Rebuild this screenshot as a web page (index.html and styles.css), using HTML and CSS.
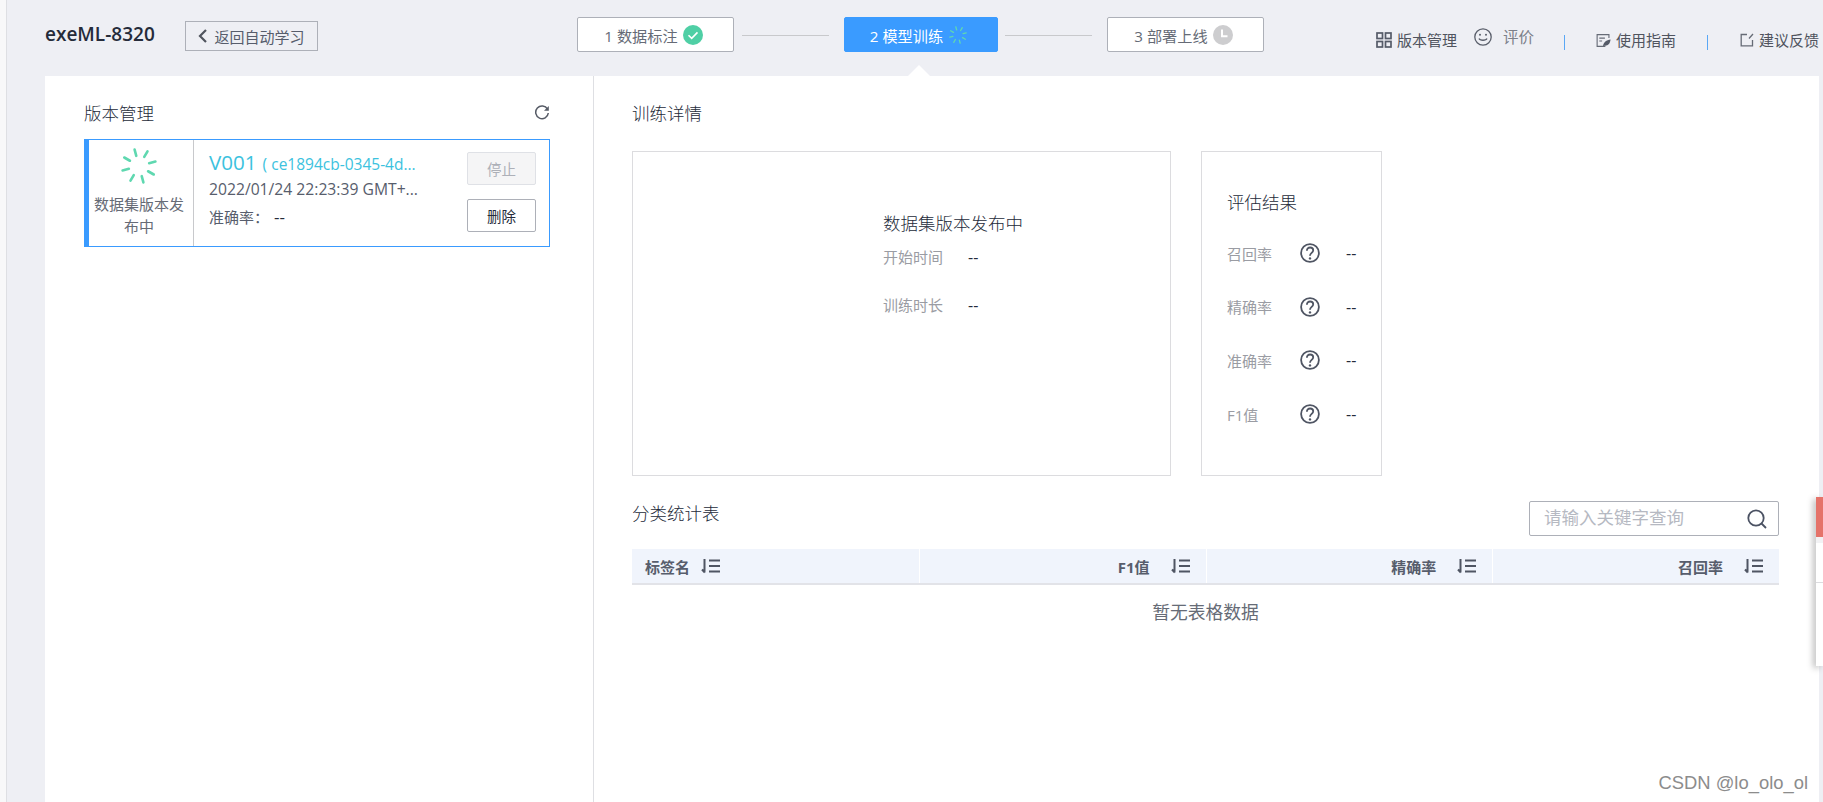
FILE: index.html
```html
<!DOCTYPE html>
<html lang="zh-CN">
<head>
<meta charset="utf-8">
<title>exeML-8320</title>
<link rel="stylesheet" href="styles.css">
</head>
<body>
<svg class="defs" width="0" height="0" aria-hidden="true">
  <symbol id="spin" viewBox="-20 -20 40 40">
    <g stroke-width="2.6" stroke-linecap="round">
      <path d="M0-17V-10.500" transform="rotate(-15)"/>
      <path d="M0-17V-10.500" transform="rotate(30)"/>
      <path d="M0-17V-10.500" transform="rotate(75)"/>
      <path d="M0-17V-10.500" transform="rotate(120)"/>
      <path d="M0-17V-10.500" transform="rotate(165)"/>
      <path d="M0-17V-10.500" transform="rotate(210)"/>
      <path d="M0-17V-10.500" transform="rotate(255)"/>
      <path d="M0-17V-10.500" transform="rotate(300)"/>
    </g>
  </symbol>
  <symbol id="help" viewBox="0 0 20 20">
    <circle cx="10" cy="10" r="8.900" fill="none" stroke="#4f5563" stroke-width="1.800"/>
    <path d="M6.900 7.800c0-2 1.300-3.300 3.200-3.300s3.100 1.200 3.100 2.800c0 2.500-3.200 2.700-3.200 5.400" fill="none" stroke="#4f5563" stroke-width="1.800"/>
    <circle cx="10" cy="15.400" r="1.200" fill="#4f5563"/>
  </symbol>
  <symbol id="sort" viewBox="0 0 20 16">
    <path d="M3.500 1v13.500M3.800 14.500L1 11.500" fill="none" stroke="#4f5563" stroke-width="2"/>
    <path d="M8 2.500h11M8 8h11M8 13.500h11" fill="none" stroke="#4f5563" stroke-width="1.900"/>
  </symbol>
</svg>

<div class="page">
  <header class="topbar">
    <h1 class="app-title">exeML-8320</h1>
    <a class="back-btn">
      <svg class="back-icon" viewBox="0 0 10 14"><path d="M8 1L2 7l6 6" fill="none" stroke="#50545e" stroke-width="2.200"/></svg>
      返回自动学习
    </a>

    <nav class="steps">
      <div class="step">1 数据标注
        <svg class="step-icon" viewBox="0 0 20 20"><circle cx="10" cy="10" r="10" fill="#4fcfa5"/><path d="M5.500 10.200l3.200 3.200 5.800-6" fill="none" stroke="#fff" stroke-width="1.600"/></svg>
      </div>
      <span class="step-line"></span>
      <div class="step step-active">2 模型训练
        <svg class="step-icon step-spin"><use href="#spin"/></svg>
        <span class="step-caret"></span>
      </div>
      <span class="step-line"></span>
      <div class="step">3 部署上线
        <svg class="step-icon" viewBox="0 0 20 20"><circle cx="10" cy="10" r="10" fill="#cdcdcf"/><path d="M9 4.500v6.800h5.500" fill="none" stroke="#fff" stroke-width="2"/></svg>
      </div>
    </nav>

    <div class="top-links">
      <a class="top-link top-link-versions">
        <svg class="link-icon" viewBox="0 0 16 16"><g fill="none" stroke="#555b68" stroke-width="1.700"><rect x="1" y="1" width="5.500" height="5.500"/><rect x="9.500" y="1" width="5.500" height="5.500"/><rect x="1" y="9.500" width="5.500" height="5.500"/><rect x="9.500" y="9.500" width="5.500" height="5.500"/></g></svg>
        版本管理
      </a>
      <a class="top-link top-link-rate">
        <svg class="smile-icon" viewBox="0 0 18 18"><g fill="none" stroke="#5a5f6b" stroke-width="1.300"><circle cx="9" cy="9" r="8.200"/><path d="M5 10.500c1 2.300 7 2.300 8 0"/></g><circle cx="6" cy="6.800" r="1" fill="#5a5f6b"/><circle cx="12" cy="6.800" r="1" fill="#5a5f6b"/></svg>
        <span class="rate-text">评价</span>
      </a>
      <i class="link-sep link-sep-first"></i>
      <a class="top-link top-link-guide">
        <svg class="link-icon" viewBox="0 0 16 16"><path d="M10 14.300H1.200V1.700h12.600v3.500M3.500 5.500h6M3.500 8.500h3" fill="none" stroke="#666b76" stroke-width="1.200"/><path d="M7.500 14c.5-4 3.500-6.500 8-7-.3 4.500-3 7-6.500 6.500z" fill="#555b68"/></svg>
        使用指南
      </a>
      <i class="link-sep link-sep-second"></i>
      <a class="top-link top-link-feedback">
        <svg class="link-icon small" viewBox="0 0 14 14"><path d="M7 1.500H1.200v11.300h11.300V7M9 5.500l4-4.500" fill="none" stroke="#666b76" stroke-width="1.300"/></svg>
        建议反馈
      </a>
    </div>
  </header>

  <main class="content">
    <aside class="versions">
      <div class="versions-head">
        <h2 class="section-title">版本管理</h2>
        <svg class="refresh" viewBox="0 0 16 16"><path d="M13.500 4.200A6.300 6.300 0 1 0 14.300 8" fill="none" stroke="#565b66" stroke-width="1.500"/><path d="M14.800 1v4.800H10z" fill="#565b66"/></svg>
      </div>
      <article class="version-card">
        <div class="version-status">
          <svg class="status-spin"><use href="#spin"/></svg>
          <p>数据集版本发布中</p>
        </div>
        <div class="version-info">
          <div class="version-name"><b>V001</b> ( ce1894cb-0345-4d...</div>
          <div class="version-date">2022/01/24 22:23:39 GMT+...</div>
          <div class="version-acc"><span>准确率：</span><em>--</em></div>
        </div>
        <div class="version-actions">
          <button class="btn btn-disabled">停止</button>
          <button class="btn">删除</button>
        </div>
      </article>
    </aside>

    <section class="details">
      <h2 class="section-title">训练详情</h2>
      <div class="panels">
        <div class="panel panel-main">
          <div class="train-state">
            <h3>数据集版本发布中</h3>
            <dl class="train-row"><dt>开始时间</dt><dd>--</dd></dl>
            <dl class="train-row"><dt>训练时长</dt><dd>--</dd></dl>
          </div>
        </div>
        <div class="panel panel-eval">
          <h3>评估结果</h3>
          <dl class="eval-row"><dt>召回率</dt><svg class="help"><use href="#help"/></svg><dd>--</dd></dl>
          <dl class="eval-row"><dt>精确率</dt><svg class="help"><use href="#help"/></svg><dd>--</dd></dl>
          <dl class="eval-row"><dt>准确率</dt><svg class="help"><use href="#help"/></svg><dd>--</dd></dl>
          <dl class="eval-row"><dt>F1值</dt><svg class="help"><use href="#help"/></svg><dd>--</dd></dl>
        </div>
      </div>

      <div class="stats-head">
        <h2 class="section-title">分类统计表</h2>
        <div class="search">
          <span class="search-ph">请输入关键字查询</span>
          <svg class="search-icon" viewBox="0 0 20 20"><circle cx="9" cy="9" r="7.700" fill="none" stroke="#4b5263" stroke-width="1.800"/><path d="M14.500 14.500l4.500 4.500" stroke="#4b5263" stroke-width="1.800"/></svg>
        </div>
      </div>

      <div class="table-head">
        <div class="th th-left">标签名<svg class="sort"><use href="#sort"/></svg></div>
        <div class="th">F1值<svg class="sort"><use href="#sort"/></svg></div>
        <div class="th">精确率<svg class="sort"><use href="#sort"/></svg></div>
        <div class="th">召回率<svg class="sort"><use href="#sort"/></svg></div>
      </div>
      <div class="table-empty">暂无表格数据</div>
    </section>
  </main>
</div>

<div class="side-widget"><span class="side-red"></span><span class="side-gap"></span><span class="side-white"></span></div>
<div class="watermark">CSDN @lo_olo_ol</div>
</body>
</html>
```

FILE: styles.css
```css
* { box-sizing: border-box; }
html, body { height: 100%; }
body {
  margin: 0;
  height: 802px;
  overflow: hidden;
  background: #f8f8f9;
  font-family: "Open Sans", "Noto Sans CJK SC", sans-serif;
  color: #50545e;
}
.defs { position: absolute; }
.page {
  margin-left: 6px;
  height: 802px;
  background: #eeeff4;
  border-left: 1px solid #dedfe3;
  display: flex;
  flex-direction: column;
}
a { color: inherit; text-decoration: none; }
h1, h2, h3, p, dl, dd { margin: 0; font-weight: 400; }

/* top bar */
.topbar {
  height: 76px;
  flex: none;
  display: flex;
  align-items: flex-start;
  padding-left: 38px;
  padding-right: 4px;
}
.app-title {
  width: 140px;
  margin-top: 20px;
  font-size: 19px;
  line-height: 28px;
  font-weight: 600;
  color: #252b3a;
}
.back-btn {
  width: 133px;
  height: 30px;
  margin-top: 21px;
  display: flex;
  align-items: center;
  justify-content: center;
  gap: 6px;
  border: 1px solid #adb0b8;
  font-size: 15px;
  color: #575d6c;
}
.back-icon { width: 10px; height: 14px; }
.steps {
  margin-left: 259px;
  margin-top: 17px;
  display: flex;
  align-items: center;
}
.step {
  position: relative;
  width: 157px;
  height: 35px;
  padding-right: 4px;
  display: flex;
  align-items: center;
  justify-content: center;
  gap: 5px;
  background: #fff;
  border: 1px solid #adb0b8;
  border-radius: 2px;
  font-size: 15.200px;
  color: #666b76;
}
.step-active {
  width: 154px;
  background: #3a9bff;
  border-color: #3a9bff;
  color: #fff;
}
.step-line {
  width: 87px;
  height: 1px;
  margin: 2px 15px 0 8px;
  background: #c8c9cc;
}
.step-active + .step-line { margin-left: 7px; }
.step-icon { width: 20px; height: 20px; flex: none; }
.step-spin { stroke: #5fd8b0; }
.step-caret {
  position: absolute;
  left: 63px;
  top: 47px;
  width: 0;
  height: 0;
  border-left: 11px solid transparent;
  border-right: 11px solid transparent;
  border-bottom: 11px solid #fff;
}
.top-links {
  margin-left: auto;
  height: 76px;
  display: flex;
  align-items: flex-start;
  font-size: 15px;
  color: #50545e;
}
.top-link { display: flex; align-items: center; gap: 5px; line-height: 22px; }
.top-link-versions { margin-top: 29px; }
.top-link-rate { margin-top: 26px; margin-left: 17px; gap: 11px; }
.top-link-guide { margin-top: 29px; margin-left: 31px; }
.top-link-feedback { margin-top: 29px; margin-left: 32px; }
.rate-text { color: #7c808a; font-size: 15.500px; }
.link-icon { width: 15px; height: 15px; flex: none; }
.link-icon.small { width: 14px; height: 14px; }
.top-links .top-link-versions .link-icon { width: 16px; height: 16px; }
.smile-icon { width: 18px; height: 18px; }
.link-sep {
  width: 1px;
  height: 15px;
  margin-top: 35px;
  background: #5aa7f5;
}
.link-sep-first { margin-left: 30px; }
.link-sep-second { margin-left: 31px; }

/* content */
.content {
  flex: 1;
  margin-left: 38px;
  margin-right: 4px;
  background: #fff;
  display: flex;
  min-height: 0;
}
.versions {
  width: 549px;
  flex: none;
  padding: 25px 43px 0 39px;
  border-right: 1px solid #dedfe3;
}
.versions-head {
  height: 38px;
  display: flex;
  justify-content: space-between;
  align-items: flex-start;
}
.section-title {
  font-size: 17.500px;
  line-height: 24px;
  color: #252b3a;
  font-weight: 300;
}
.refresh { width: 16px; height: 16px; margin-top: 4px; }
.version-card {
  height: 108px;
  display: flex;
  border: 1px solid #3a9bff;
  border-left: 5px solid #3a9bff;
}
.version-status {
  width: 105px;
  flex: none;
  border-right: 1px solid #c8c9cc;
  padding: 6px 4px 0 0;
  text-align: center;
  color: #666b76;
}
.status-spin { display: block; width: 40px; height: 40px; margin: 0 auto 7px; stroke: #5fd8b0; }
.version-status p { font-size: 15px; line-height: 22px; padding: 0 2px; }
.version-info {
  width: 273px;
  flex: none;
  padding: 8px 0 0 15px;
  font-size: 15px;
  color: #575d6c;
  white-space: nowrap;
}
.version-name { line-height: 28px; color: #3cc2de; display: flex; align-items: baseline; gap: 6px; font-size: 15.500px; }
.version-name b { font-size: 20.600px; font-weight: 400; }
.version-date { line-height: 20px; margin-top: 1px; font-size: 15.700px; }
.version-acc { line-height: 22px; margin-top: 7px; font-size: 15px; display: flex; }
.version-acc span { width: 65px; }
.version-acc em { font-style: normal; color: #252b3a; font-size: 17px; }
.version-actions {
  flex: 1;
  padding-top: 12px;
  display: flex;
  flex-direction: column;
  gap: 14px;
}
.btn {
  width: 69px;
  height: 33px;
  padding: 0;
  background: #fff;
  border: 1px solid #adb0b8;
  border-radius: 2px;
  font: inherit;
  font-size: 14.500px;
  color: #252b3a;
}
.btn-disabled {
  background: #f5f5f6;
  border-color: #dfe1e6;
  color: #adb0b8;
}

.details { flex: 1; padding: 25px 0 0 38px; min-width: 0; margin-right: 40px; }
.panels { display: flex; gap: 30px; margin-top: 26px; }
.panel { height: 325px; border: 1px solid #dcdcdf; }
.panel-main { width: 539px; padding: 59px 0 0 250px; }
.train-state h3 { font-size: 17.500px; line-height: 24px; color: #252b3a; font-weight: 300; }
.train-row {
  display: flex;
  margin-top: 11px;
  height: 37px;
  font-size: 15px;
  line-height: 22px;
}
.train-row dt { width: 85px; color: #9a9ca3; }
.train-row dd { color: #252b3a; font-size: 16px; }
.panel-eval { width: 181px; padding: 37px 0 0 25px; }
.panel-eval h3 { font-size: 17.500px; line-height: 26px; color: #252b3a; margin-bottom: 27px; font-weight: 300; }
.eval-row {
  display: flex;
  align-items: center;
  height: 22px;
  margin-bottom: 31.700px;
  font-size: 15px;
}
.eval-row dt { width: 73px; color: #9a9ca3; }
.help { width: 20px; height: 20px; flex: none; }
.eval-row dd { margin-left: 26px; color: #252b3a; font-size: 16px; }

.stats-head {
  display: flex;
  justify-content: space-between;
  align-items: flex-start;
  margin-top: 25px;
}
.search {
  width: 250px;
  height: 35px;
  display: flex;
  align-items: center;
  justify-content: space-between;
  padding: 0 11px 0 14px;
  border: 1px solid #adb0b8;
  border-radius: 2px;
}
.search-ph { font-size: 17.500px; line-height: 26px; padding-bottom: 3px; color: #b6b9c2; }
.search-icon { width: 20px; height: 20px; }
.table-head {
  margin-top: 13px;
  height: 36px;
  display: grid;
  grid-template-columns: repeat(4, 1fr);
  background: #f0f4fc;
  border-bottom: 2px solid #e2e3e8;
}
.th {
  display: flex;
  align-items: center;
  justify-content: flex-end;
  gap: 21px;
  padding-right: 15px;
  font-size: 15px;
  font-weight: 700;
  color: #575d6c;
  border-left: 1px solid #fff;
}
.th-left { justify-content: flex-start; gap: 11px; padding-left: 13px; border-left: 0; }
.sort { width: 20px; height: 16px; flex: none; }
.table-empty {
  text-align: center;
  margin-top: 14px;
  font-size: 17.800px;
  line-height: 26px;
  color: #666b76;
}

/* overlays */
.side-widget {
  position: absolute;
  left: 1816px;
  top: 497px;
  width: 7px;
  height: 169px;
  background: #fff;
  box-shadow: -3px 2px 6px rgba(0, 0, 0, .25);
  display: flex;
  flex-direction: column;
}
.side-red { height: 40px; background: #e5736a; }
.side-gap { height: 6px; background: #f2f2f4; }
.side-white { height: 40px; border-bottom: 1px solid #dcdcdf; }
.watermark {
  position: absolute;
  right: 15px;
  top: 771px;
  font-family: "Liberation Sans", sans-serif;
  font-size: 18.400px;
  line-height: 24px;
  color: #8c8c8c;
}
```
